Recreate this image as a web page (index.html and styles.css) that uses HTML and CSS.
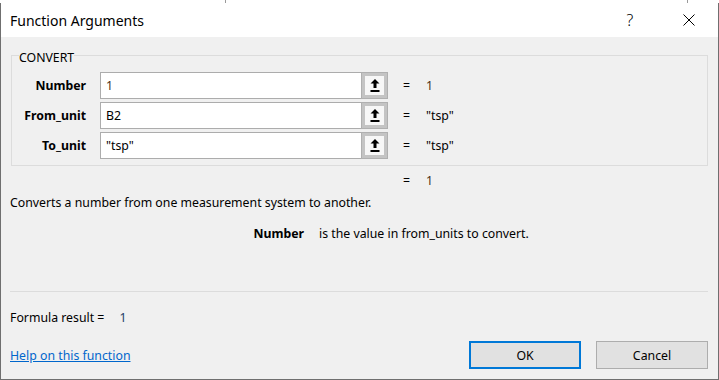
FILE: index.html
```html
<!DOCTYPE html>
<html lang="en">
<head>
    <meta charset="UTF-8">
    <title>Function Arguments</title>
    <link rel="stylesheet" href="styles.css">
</head>
<body>
    <div class="sheet-edge"></div>

    <div class="dialog">
        <div class="titlebar">
            <span class="title">Function Arguments</span>
            <span class="help-btn">?</span>
            <span class="close-btn">
                <svg width="12" height="12" viewBox="0 0 12 12">
                    <path d="M0.5 0.5 L11.5 11.5 M11.5 0.5 L0.5 11.5" stroke="#000" stroke-width="1" fill="none"/>
                </svg>
            </span>
        </div>

        <div class="dialog-body">
            <div class="group">
                <div class="group-title">CONVERT</div>
                <div class="args">
                    <div class="arg-name">Number</div>
                    <div class="arg-input">
                        <span class="arg-field num">1</span>
                        <span class="pick"><span class="pick-face">
                            <svg width="10" height="13" viewBox="0 0 10 13"><path d="M5 0 L9.5 4.5 L6.5 4.5 L6.5 9 L3.5 9 L3.5 4.5 L0.5 4.5 Z M0.5 11 H9.5 V13 H0.5 Z" fill="#000"/></svg>
                        </span></span>
                    </div>
                    <div class="arg-value"><span class="eq">=</span><span class="num">1</span></div>

                    <div class="arg-name">From_unit</div>
                    <div class="arg-input">
                        <span class="arg-field">B2</span>
                        <span class="pick"><span class="pick-face">
                            <svg width="10" height="13" viewBox="0 0 10 13"><path d="M5 0 L9.5 4.5 L6.5 4.5 L6.5 9 L3.5 9 L3.5 4.5 L0.5 4.5 Z M0.5 11 H9.5 V13 H0.5 Z" fill="#000"/></svg>
                        </span></span>
                    </div>
                    <div class="arg-value"><span class="eq">=</span><span>"tsp"</span></div>

                    <div class="arg-name">To_unit</div>
                    <div class="arg-input">
                        <span class="arg-field">"tsp"</span>
                        <span class="pick"><span class="pick-face">
                            <svg width="10" height="13" viewBox="0 0 10 13"><path d="M5 0 L9.5 4.5 L6.5 4.5 L6.5 9 L3.5 9 L3.5 4.5 L0.5 4.5 Z M0.5 11 H9.5 V13 H0.5 Z" fill="#000"/></svg>
                        </span></span>
                    </div>
                    <div class="arg-value"><span class="eq">=</span><span>"tsp"</span></div>
                </div>
            </div>

            <div class="total"><span class="eq">=</span><span class="num">1</span></div>

            <p class="summary">Converts a number from one measurement system to another.</p>

            <div class="arg-help">
                <b>Number</b>
                <span>is the value in from_units to convert.</span>
            </div>
        </div>

        <div class="footer">
            <div class="result">Formula result = <span class="result-val">1</span></div>
            <div class="actions">
                <a href="#" class="help-link">Help on this function</a>
                <button class="btn btn-ok">OK</button>
                <button class="btn">Cancel</button>
            </div>
        </div>
    </div>
</body>
</html>
```

FILE: styles.css
```css
body {
    margin: 0;
    width: 719px;
    height: 380px;
    overflow: hidden;
    background: #fff;
    font-family: 'Noto Sans', 'Open Sans', sans-serif;
    font-size: 12.3px;
    color: #000;
}

.sheet-edge {
    height: 3px;
    background:
        linear-gradient(#9a9a9a, #9a9a9a) 225px 0 / 1px 3px no-repeat,
        linear-gradient(#9a9a9a, #9a9a9a) 687px 0 / 1px 3px no-repeat,
        #fff;
}

.dialog {
    height: 377px;
    box-sizing: border-box;
    border: 1px solid #6f6f6f;
    border-top: none;
    background: #f0f0f0;
    display: flex;
    flex-direction: column;
}

/* title bar */
.titlebar {
    height: 34px;
    background: #fff;
    display: flex;
    align-items: center;
    padding-left: 9px;
}

.title {
    font-size: 14px;
    flex: 1;
}

.help-btn {
    width: 58px;
    text-align: center;
    font-size: 16px;
    font-weight: 300;
}

.close-btn {
    width: 59px;
    display: flex;
    justify-content: center;
}

/* main area */
.dialog-body {
    flex: 1;
    padding: 0 9px;
}

.group {
    margin: 18px 1px 0 1px;
    border: 1px solid #dcdcdc;
    padding-bottom: 6px;
}

.group-title {
    width: fit-content;
    margin: -5px 0 0 7px;
    line-height: 14px;
    background: #f0f0f0;
}

.args {
    margin-top: 7px;
    display: grid;
    grid-template-columns: 74px 288px 1fr;
    grid-auto-rows: 27px;
    column-gap: 14px;
    row-gap: 3px;
    align-items: center;
}

.arg-name {
    text-align: right;
    font-weight: bold;
}

.arg-input {
    display: flex;
    height: 27px;
}

.arg-field {
    flex: 1;
    box-sizing: border-box;
    border: 1px solid #acacac;
    border-right: none;
    background: #fff;
    padding-left: 5px;
    line-height: 25px;
}

.pick {
    width: 27px;
    height: 27px;
    box-sizing: border-box;
    background: #c4c4c4;
    border: 1px solid #b0b0b0;
    padding: 3px;
}

.pick-face {
    display: flex;
    align-items: center;
    justify-content: center;
    height: 100%;
    background: #f7f7f7;
}

.arg-value,
.total {
    display: flex;
}

.eq {
    width: 23px;
    padding-left: 1px;
}

.num {
    color: #4a3016;
}

.total {
    margin-top: 7px;
    padding-left: 392px;
    line-height: 16px;
}

.summary {
    margin: 6px 0 0 0;
    line-height: 16px;
}

.arg-help {
    margin-top: 15px;
    display: grid;
    grid-template-columns: 294px 1fr;
    column-gap: 15px;
    line-height: 16px;
}

.arg-help b {
    text-align: right;
}

/* bottom part */
.footer {
    margin: 0 10px 0 9px;
    border-top: 1px solid #dcdcdc;
    padding: 18px 0 10px 0;
}

.result {
    line-height: 16px;
}

.result-val {
    margin-left: 12px;
    color: #1e3a66;
}

.actions {
    margin-top: 15px;
    display: flex;
    align-items: center;
    gap: 15px;
}

.help-link {
    flex: 1;
    color: #0066cc;
}

.btn {
    width: 112px;
    height: 28px;
    box-sizing: border-box;
    border: 1px solid #adadad;
    background: #e1e1e1;
    font-family: inherit;
    font-size: 12.3px;
    color: #000;
    padding: 0;
}

.btn-ok {
    border: 2px solid #0078d7;
}
```
